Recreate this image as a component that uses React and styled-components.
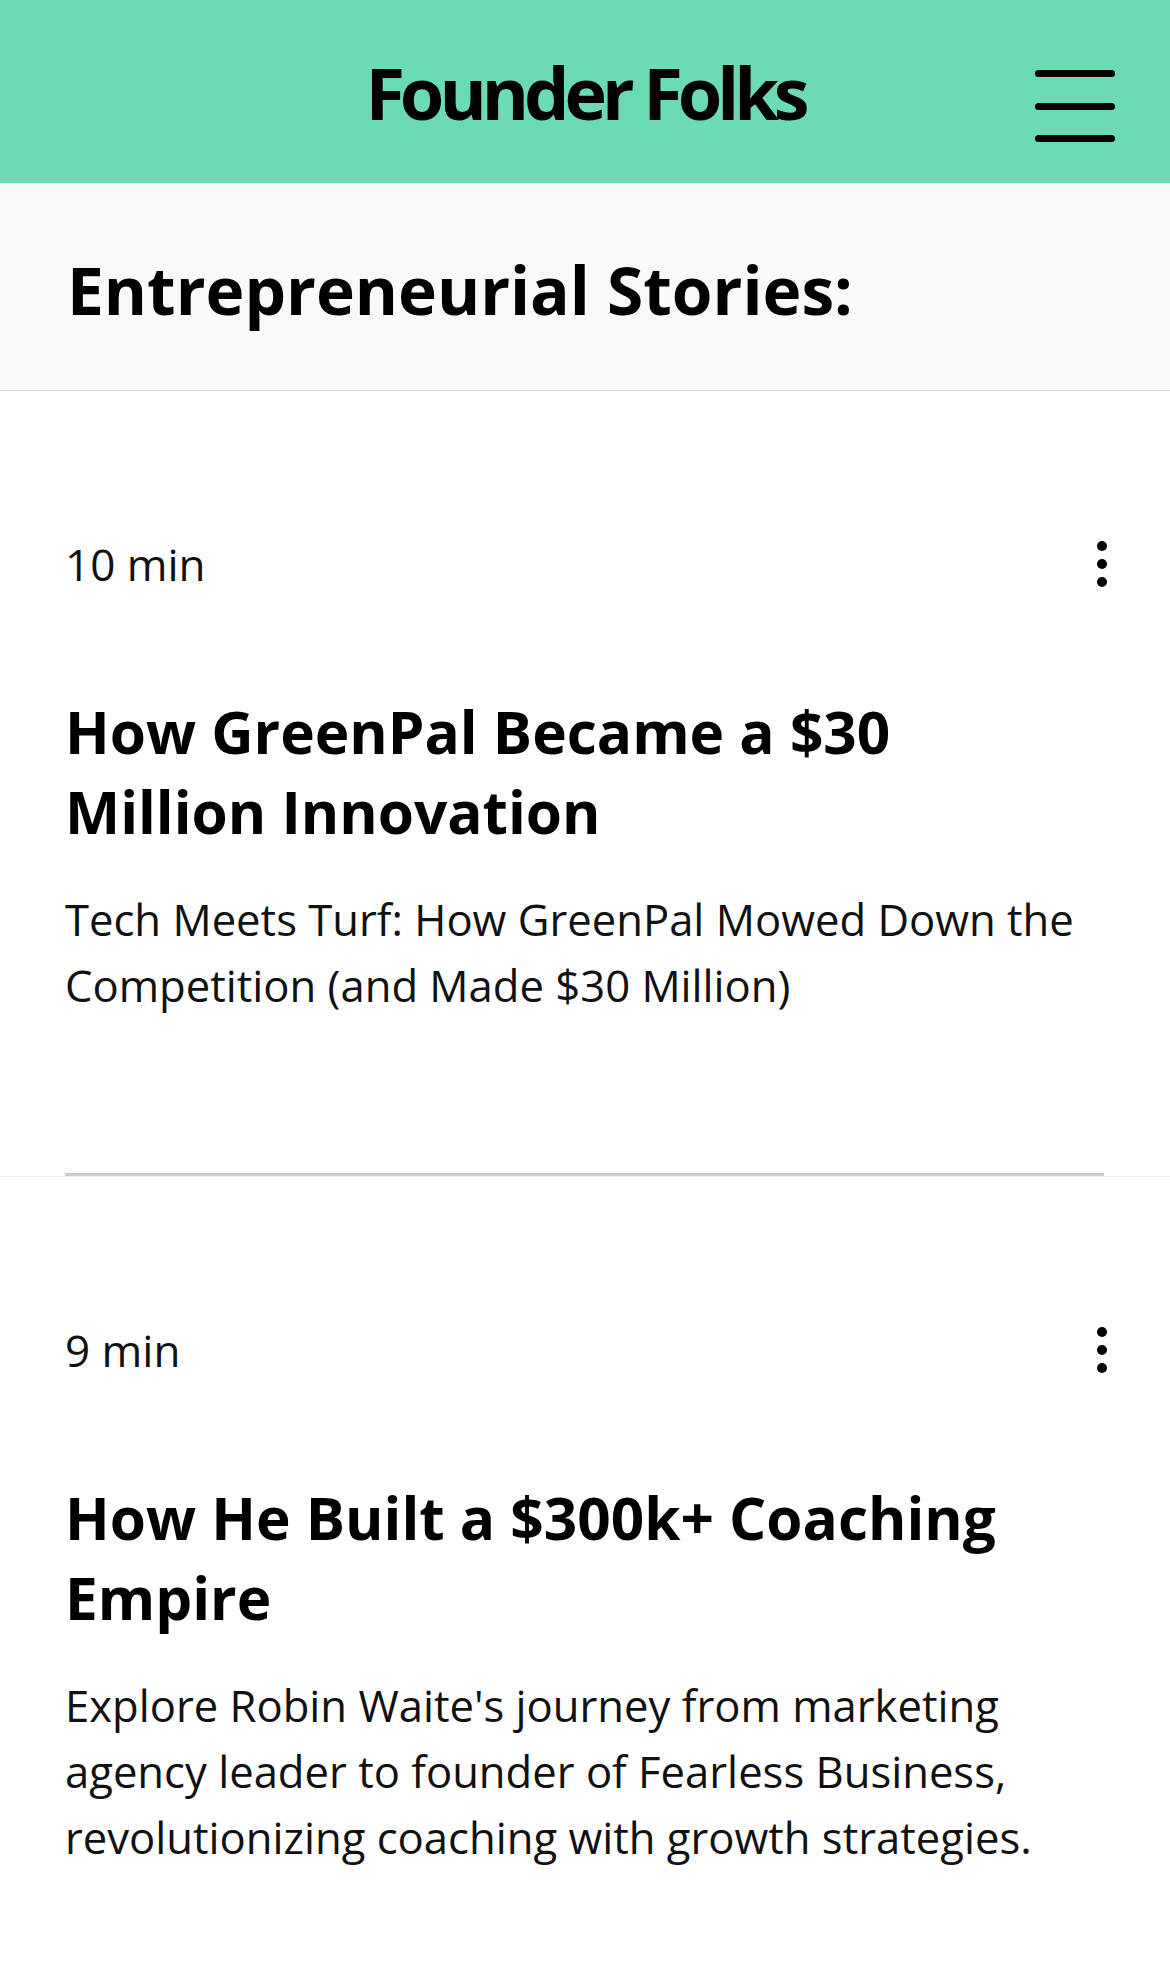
import React from "react";
import styled, { createGlobalStyle } from "styled-components";

const GlobalStyle = createGlobalStyle`
  html, body { margin: 0; padding: 0; background: #ffffff; }
  body { font-family: "Open Sans", "Noto Sans", sans-serif; color: #000; }
  * { box-sizing: border-box; }
`;

const Page = styled.div`
  width: 1170px;
  min-height: 1976px;
  background: #ffffff;
`;

const Header = styled.header`
  height: 183px;
  background: #6adbb5;
  display: grid;
  grid-template-columns: 1fr auto 1fr;
  align-items: center;
  padding: 0 55px;
`;

const Brand = styled.h1`
  grid-column: 2;
  margin: 0;
  font-family: "Open Sans", sans-serif;
  font-weight: 700;
  font-size: 72px;
  line-height: 72px;
  letter-spacing: -0.07em;
  color: #000;
  white-space: nowrap;
`;

const MenuButton = styled.button`
  grid-column: 3;
  justify-self: end;
  align-self: start;
  margin-top: 70px;
  padding: 0;
  border: 0;
  background: transparent;
  display: flex;
  cursor: pointer;
`;

const SectionHead = styled.section`
  background: #f9f9f9;
  border-bottom: 1px solid #dedede;
  padding: 62px 66px 55px 67px;
`;

const SectionTitle = styled.h2`
  margin: 0;
  font-family: "Open Sans", sans-serif;
  font-weight: 700;
  font-size: 65.8px;
  line-height: 90px;
  color: #000;
`;

const Card = styled.article`
  border-bottom: 1px solid #eeeeee;
  padding: 143px 66px 0 65px;
  display: flex;
  flex-direction: column;
`;

const MetaRow = styled.div`
  display: flex;
  align-items: center;
  justify-content: space-between;
  height: 60px;
`;

const ReadTime = styled.span`
  font-size: 44px;
  line-height: 60px;
  color: #111;
`;

const MoreButton = styled.button`
  border: 0;
  padding: 0;
  background: transparent;
  display: flex;
  margin-right: -11px;
  cursor: pointer;
`;

const Title = styled.h3`
  margin: 97px 0 0;
  font-weight: 700;
  font-size: 58.5px;
  line-height: 80px;
  color: #000;
`;

const Excerpt = styled.p`
  margin: 35px 0 0;
  font-size: 43.6px;
  line-height: 66px;
  color: #111;
`;

const Divider = styled.div`
  margin-top: ${(p) => p.$gap}px;
  height: 3px;
  background: #cccccc;
`;

function MenuIcon() {
  return (
    <svg width="80" height="72" viewBox="0 0 80 72" aria-hidden="true">
      <g stroke="#000" strokeWidth="7" strokeLinecap="round">
        <line x1="3.5" y1="3.5" x2="76.5" y2="3.5" />
        <line x1="3.5" y1="36.5" x2="76.5" y2="36.5" />
        <line x1="3.5" y1="68.5" x2="76.5" y2="68.5" />
      </g>
    </svg>
  );
}

function DotsIcon() {
  return (
    <svg width="26" height="50" viewBox="0 0 26 50" aria-hidden="true">
      <g fill="#000">
        <circle cx="13" cy="7" r="5" />
        <circle cx="13" cy="25" r="5" />
        <circle cx="13" cy="43" r="5" />
      </g>
    </svg>
  );
}

const posts = [
  {
    time: "10 min",
    title: "How GreenPal Became a $30 Million Innovation",
    excerpt:
      "Tech Meets Turf: How GreenPal Mowed Down the Competition (and Made $30 Million)",
    gap: 155,
  },
  {
    time: "9 min",
    title: "How He Built a $300k+ Coaching Empire",
    excerpt:
      "Explore Robin Waite's journey from marketing agency leader to founder of Fearless Business, revolutionizing coaching with growth strategies.",
    gap: 155,
  },
];

export default function App() {
  return (
    <>
      <GlobalStyle />
      <Page>
        <Header>
          <Brand>Founder Folks</Brand>
          <MenuButton aria-label="Menu">
            <MenuIcon />
          </MenuButton>
        </Header>
        <SectionHead>
          <SectionTitle>Entrepreneurial Stories:</SectionTitle>
        </SectionHead>
        {posts.map((p) => (
          <Card key={p.title}>
            <MetaRow>
              <ReadTime>{p.time}</ReadTime>
              <MoreButton aria-label="More actions">
                <DotsIcon />
              </MoreButton>
            </MetaRow>
            <Title>{p.title}</Title>
            <Excerpt>{p.excerpt}</Excerpt>
            <Divider $gap={p.gap} />
          </Card>
        ))}
      </Page>
    </>
  );
}
